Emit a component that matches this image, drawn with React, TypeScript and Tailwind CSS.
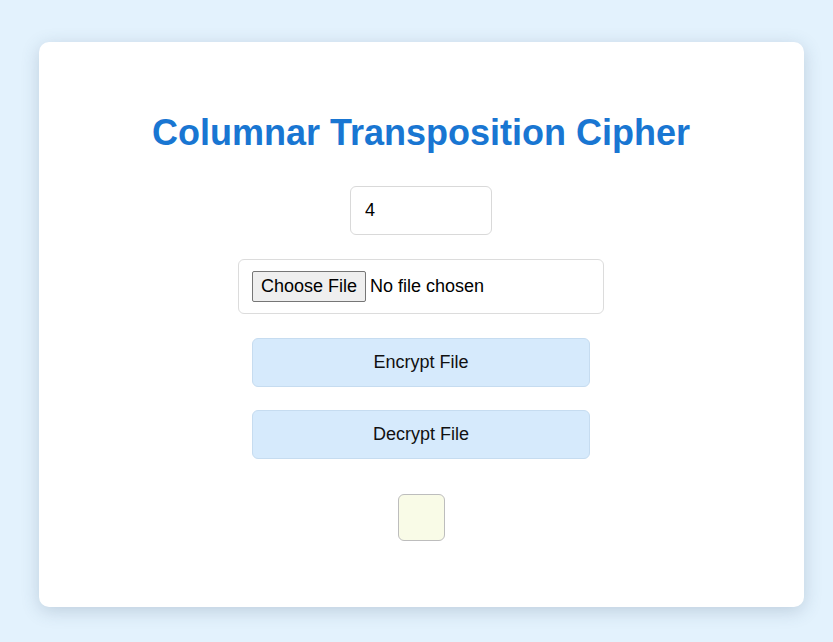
import React, { useState } from 'react';

const App = () => {
  const [columns, setColumns] = useState('4');

  return (
    <div className="min-h-screen bg-[#e3f2fd] pt-[42px] pl-[39px] font-['Liberation_Sans',Arial,sans-serif]">
      <div className="w-[765px] h-[565px] bg-white rounded-[10px] shadow-[0_4px_18px_rgba(60,80,110,0.22)] pt-[70px] pr-[1px] flex flex-col items-center">
        <h1 className="text-[36px] leading-[41px] font-bold text-[#1976d2]">Columnar Transposition Cipher</h1>

        <input
          type="number"
          value={columns}
          onChange={(e) => setColumns(e.target.value)}
          className="mt-[33px] w-[142px] h-[49px] px-[14px] text-[18px] text-black border border-[#d9d9d9] rounded-[6px] outline-none [appearance:textfield] [&::-webkit-inner-spin-button]:appearance-none"
        />

        <div className="mt-[24px] w-[366px] h-[55px] pl-[13px] pr-[12px] flex items-center border border-[#dcdcdc] rounded-[6px]">
          <input
            type="file"
            className="text-[18px] text-black file:mr-[4px] file:px-[8px] file:py-[1px] file:border file:border-[#767676] file:bg-[#efefef] file:rounded-[2px] file:text-black"
          />
        </div>

        <button className="mt-[24px] w-[338px] h-[49px] bg-[#d6eafc] border border-[#c6dcf0] rounded-[6px] text-[18px] text-[#111]">
          Encrypt File
        </button>

        <button className="mt-[23px] w-[338px] h-[49px] bg-[#d6eafc] border border-[#c6dcf0] rounded-[6px] text-[18px] text-[#111]">
          Decrypt File
        </button>

        <div className="mt-[35px] w-[47px] h-[47px] bg-[#f9fbe7] border border-[#bdbdbd] rounded-[6px]" />
      </div>
    </div>
  );
};

export default App;
